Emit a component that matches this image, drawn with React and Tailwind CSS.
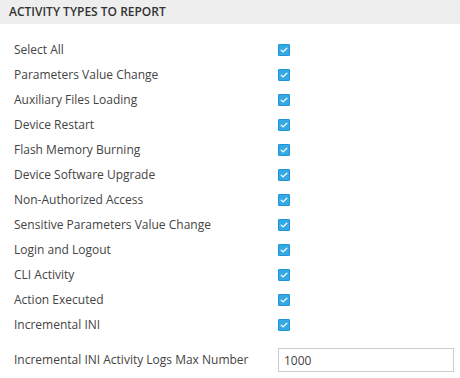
import React, { useState } from 'react';

const activities = [
    'Select All',
    'Parameters Value Change',
    'Auxiliary Files Loading',
    'Device Restart',
    'Flash Memory Burning',
    'Device Software Upgrade',
    'Non-Authorized Access',
    'Sensitive Parameters Value Change',
    'Login and Logout',
    'CLI Activity',
    'Action Executed',
    'Incremental INI'
];

function Check() {
    return (
        <span className="flex h-[12px] w-[12px] items-center justify-center rounded-[1px] border border-[#1f93d6] bg-[#35a8e6]">
            <svg width="8" height="8" viewBox="0 0 8 8" fill="none">
                <path d="M1.2 4.1 L3.1 5.9 L6.8 2.2" stroke="#ffffff" strokeWidth="1.3" strokeLinecap="round" strokeLinejoin="round" />
            </svg>
        </span>
    );
}

export default function App() {
    const [maxNumber, setMaxNumber] = useState('1000');

    return (
        <div className="w-[460px] h-[378px] bg-white overflow-hidden font-['Open_Sans',sans-serif]">
            <div className="h-[24px] bg-[#eeeeee] pl-[9px] flex items-center">
                <h3 className="text-[12px] font-semibold uppercase text-[#333333] leading-none">Activity Types to Report</h3>
            </div>

            <div className="pt-[13px]">
                {activities.map((label) => (
                    <div key={label} className="flex h-[25px] items-center">
                        <div className="w-[278px] pl-[14px] text-[12px] text-[#444444]">{label}</div>
                        <Check />
                    </div>
                ))}
            </div>

            <div className="mt-[11px] flex h-[24px] items-center">
                <div className="w-[278px] pl-[14px] text-[12px] text-[#444444]">Incremental INI Activity Logs Max Number</div>
                <input
                    value={maxNumber}
                    onChange={(e) => setMaxNumber(e.target.value)}
                    className="h-[24px] w-[176px] border border-[#c9ccd3] px-[5px] text-[12px] text-[#444444] outline-none"
                />
            </div>
        </div>
    );
}
